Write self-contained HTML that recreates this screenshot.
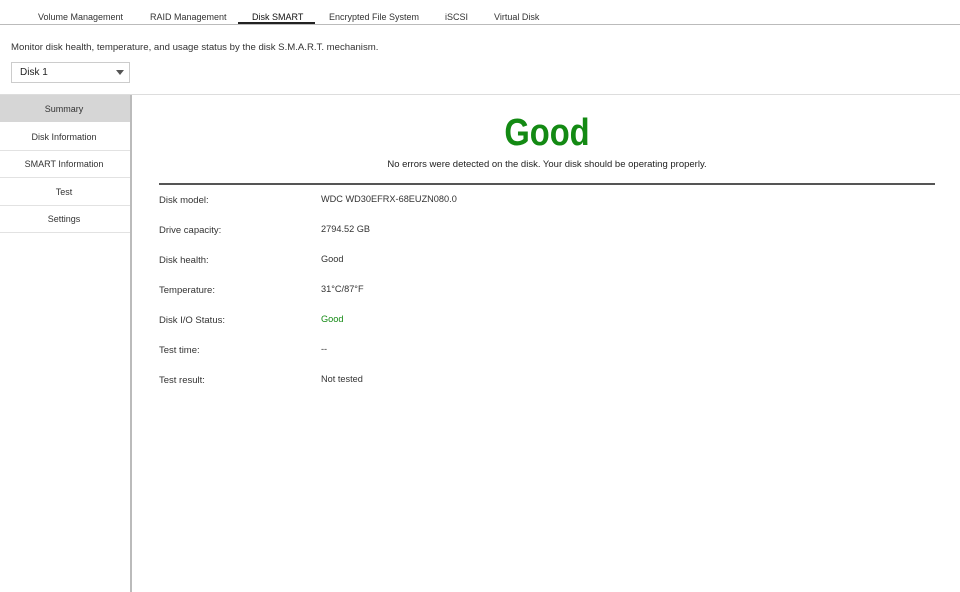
<!DOCTYPE html><html><head><style>
body{margin:0;width:960px;height:592px;background:#fff;font-family:"Liberation Sans",sans-serif;color:#333;position:relative;overflow:hidden;font-size:9.5px}
.a{position:absolute;white-space:nowrap}
.tab{position:absolute;top:12px;font-size:9px;color:#333}
.v{font-size:9.2px}
.s{position:absolute;left:0;width:128px;text-align:center;font-size:9px}
</style></head><body>
<div class="a" style="left:0;top:24px;width:960px;height:1px;background:#bbb"></div>
<div class="tab" style="left:38px">Volume Management</div>
<div class="tab" style="left:150px">RAID Management</div>
<div class="tab" style="left:252px;color:#111">Disk SMART</div>
<div class="a" style="left:238px;top:22px;width:77px;height:2px;background:#222"></div>
<div class="tab" style="left:329px">Encrypted File System</div>
<div class="tab" style="left:445px">iSCSI</div>
<div class="tab" style="left:494px">Virtual Disk</div>
<div class="a" style="left:11px;top:42px;font-size:9.6px">Monitor disk health, temperature, and usage status by the disk S.M.A.R.T. mechanism.</div>
<div class="a" style="left:11px;top:62px;width:117px;height:19px;border:1px solid #ccc"></div>
<div class="a" style="left:20px;top:67px;font-size:10px;color:#222">Disk 1</div>
<div class="a" style="left:116px;top:70px;width:0;height:0;border-left:4px solid transparent;border-right:4px solid transparent;border-top:5px solid #555"></div>
<div class="a" style="left:0;top:94px;width:960px;height:1px;background:#ddd"></div>
<div class="a" style="left:130px;top:95px;width:2px;height:497px;background:#bbb"></div>
<div class="a" style="left:0;top:95px;width:130px;height:27px;background:#d6d6d6"></div>
<div class="s" style="top:104px">Summary</div>
<div class="s" style="top:132px">Disk Information</div>
<div class="s" style="top:159px">SMART Information</div>
<div class="s" style="top:187px">Test</div>
<div class="s" style="top:214px">Settings</div>
<div class="a" style="left:0;top:150px;width:130px;height:1px;background:#e2e2e2"></div>
<div class="a" style="left:0;top:177px;width:130px;height:1px;background:#e2e2e2"></div>
<div class="a" style="left:0;top:205px;width:130px;height:1px;background:#e2e2e2"></div>
<div class="a" style="left:0;top:232px;width:130px;height:1px;background:#e2e2e2"></div>
<div class="a" style="left:132px;top:112px;width:830px;text-align:center;font-size:38px;font-weight:bold;color:#138a13;transform:scaleX(0.86)">Good</div>
<div class="a" style="left:132px;top:159px;width:830px;text-align:center;font-size:9.5px;color:#222">No errors were detected on the disk. Your disk should be operating properly.</div>
<div class="a" style="left:159px;top:183px;width:776px;height:2px;background:#555"></div>
<div class="a" style="left:159px;top:195px">Disk model:</div><div class="a v" style="left:321px;top:194px">WDC WD30EFRX-68EUZN080.0</div>
<div class="a" style="left:159px;top:225px">Drive capacity:</div><div class="a v" style="left:321px;top:224px">2794.52 GB</div>
<div class="a" style="left:159px;top:255px">Disk health:</div><div class="a v" style="left:321px;top:254px">Good</div>
<div class="a" style="left:159px;top:285px">Temperature:</div><div class="a v" style="left:321px;top:284px">31°C/87°F</div>
<div class="a" style="left:159px;top:315px">Disk I/O Status:</div><div class="a v" style="left:321px;top:314px;color:#138a13">Good</div>
<div class="a" style="left:159px;top:345px">Test time:</div><div class="a v" style="left:321px;top:344px">--</div>
<div class="a" style="left:159px;top:375px">Test result:</div><div class="a v" style="left:321px;top:374px">Not tested</div>
</body></html>
